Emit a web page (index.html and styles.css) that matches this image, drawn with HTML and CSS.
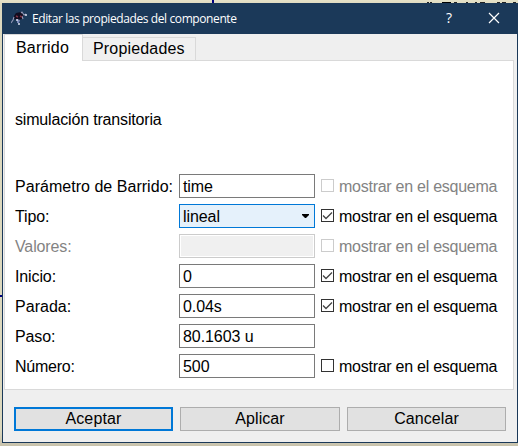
FILE: index.html
```html
<!DOCTYPE html>
<html lang="es">
<head>
<meta charset="utf-8">
<title>Editar las propiedades del componente</title>
<link rel="stylesheet" href="styles.css">
</head>
<body>
<div class="backdrop-wire top"></div>
<div class="backdrop-wire side"></div>
<div class="backdrop-marks"></div>
<main class="dialog">
  <header class="titlebar">
    <svg class="app-icon" width="17" height="16" viewBox="0 0 17 16">
      <path d="M3 5l2-3 5-1 3 3-2 4-4 1-4-1z" fill="#110d20"/>
      <path d="M10 2l1-1 2 3 2-1M3 6L2 9l-2 3M11 5l1 3" fill="none" stroke="#9297b5" stroke-width="1.1"/>
      <path d="M6 8l3 1-1 3-2 0z" fill="#7888b8"/>
      <path d="M5 5l2 1M9 5l2 1" stroke="#803447" stroke-width="1.4"/>
      <path d="M14 4h2M7 13h2M5 9h2" stroke="#dce1ef" stroke-width="1.4"/>
    </svg>
    <h1 class="title">Editar las propiedades del componente</h1>
    <span class="help">?</span>
    <svg class="close" width="12" height="12" viewBox="0 0 12 12"><path d="M1 1l10 10M11 1L1 11" stroke="#fff" stroke-width="1.2"/></svg>
  </header>
  <nav class="tabs">
    <span class="tab active">Barrido</span>
    <span class="tab second">Propiedades</span>
  </nav>
  <section class="panel">
    <p class="heading">simulación transitoria</p>
    <div class="row"><span class="label wide">Parámetro de Barrido:</span><span class="field">time</span><span class="check disabled"><i class="box"></i><span>mostrar en el esquema</span></span></div>
    <div class="row"><span class="label">Tipo:</span><span class="field select">lineal<svg class="arrow" width="7" height="4" viewBox="0 0 7 4"><path d="M0 0h7v1L4 4H3L0 1z"/></svg></span><span class="check"><i class="box"><svg width="11" height="11" viewBox="0 0 11 11"><path d="M1 5.5l3 3 6-6"/></svg></i><span>mostrar en el esquema</span></span></div>
    <div class="row"><span class="label disabled">Valores:</span><span class="field off"></span><span class="check disabled"><i class="box"></i><span>mostrar en el esquema</span></span></div>
    <div class="row"><span class="label">Inicio:</span><span class="field">0</span><span class="check"><i class="box"><svg width="11" height="11" viewBox="0 0 11 11"><path d="M1 5.5l3 3 6-6"/></svg></i><span>mostrar en el esquema</span></span></div>
    <div class="row"><span class="label wide">Parada:</span><span class="field">0.04s</span><span class="check"><i class="box"><svg width="11" height="11" viewBox="0 0 11 11"><path d="M1 5.5l3 3 6-6"/></svg></i><span>mostrar en el esquema</span></span></div>
    <div class="row"><span class="label">Paso:</span><span class="field">80.1603 u</span></div>
    <div class="row"><span class="label tight">Número:</span><span class="field">500</span><span class="check"><i class="box"></i><span>mostrar en el esquema</span></span></div>
  </section>
  <footer class="buttons">
    <span class="button default">Aceptar</span>
    <span class="button">Aplicar</span>
    <span class="button">Cancelar</span>
  </footer>
</main>
</body>
</html>
```
FILE: styles.css
```css
* { box-sizing: border-box; }
body {
  margin: 0;
  width: 518px;
  height: 446px;
  padding: 3px 0 0 2px;
  overflow: hidden;
  background: linear-gradient(#e6e2c8, #dcd8be 5px, #dcd8be 430px, #c8c2ac);
  font: 16px/20px "Liberation Sans", Arial, sans-serif;
  color: #000;
}
.backdrop-wire { position: absolute; background: #000080; }
.backdrop-wire.top { left: 212px; top: 0; width: 2px; height: 3px; }
.backdrop-wire.side { left: 0; top: 295px; width: 2px; height: 2px; }
.backdrop-marks {
  position: absolute;
  left: 427px;
  top: 2px;
  width: 89px;
  height: 1px;
  background: linear-gradient(90deg, #222 2px, transparent 2px 3px, #222 3px 5px, transparent 5px 15px, #000 15px 24px, transparent 24px 27px, #222 27px 30px, transparent 30px 39px, #222 39px 41px, transparent 41px 48px, #222 48px 50px, transparent 50px 53px, #222 53px 58px, transparent 58px 70px, #222 70px 73px, transparent 73px 75px, #222 75px 79px, transparent 79px 86px, #222 86px);
}
.dialog {
  position: relative;
  width: 516px;
  height: 440px;
  border: 1px solid #1b3959;
  border-top: 0;
  background: #efefef;
  display: flex;
  flex-direction: column;
}
.titlebar {
  height: 31px;
  flex: none;
  display: flex;
  align-items: center;
  background: #1b3959;
  color: #fff;
  padding-left: 8px;
}
.app-icon { margin-right: 4px; }
.title {
  margin: 0;
  width: 412px;
  font: 12px/16px "Open Sans", "Noto Sans", sans-serif;
  letter-spacing: -0.4px;
  white-space: nowrap;
}
.help { width: 8px; font: 14px/16px "Open Sans", sans-serif; margin: -2px 0 0 2px; }
.close { margin: -1px 0 0 34px; }
.tabs {
  height: 27px;
  flex: none;
  display: flex;
  align-items: flex-end;
  padding-left: 1px;
  position: relative;
  z-index: 1;
  margin-bottom: -1px;
}
.tab { border: 1px solid #d9d9d9; white-space: nowrap; }
.tab.active {
  width: 79px;
  height: 27px;
  padding: 3px 0 0 11px;
  background: #fff;
  border-bottom: 0;
  letter-spacing: 0.2px;
}
.tab.second {
  width: 113px;
  height: 24px;
  padding: 1px 0 0 10px;
  border-left: 0;
  background: #f0f0f0;
  letter-spacing: 0.17px;
}
.panel {
  width: 510px;
  height: 330px;
  margin-left: 1px;
  flex: none;
  padding: 0 0 0 10px;
  border: 1px solid #d9d9d9;
  background: #fff;
}
.heading { margin: 49px 0 42px; line-height: 20px; letter-spacing: -0.17px; }
.row { height: 30px; display: flex; align-items: center; white-space: nowrap; }
.label { width: 164px; letter-spacing: -0.12px; }
.label.wide { letter-spacing: 0.03px; }
.label.tight { letter-spacing: -0.25px; }
.field {
  width: 136px;
  height: 24px;
  margin-top: -2px;
  padding: 2px 0 0 3px;
  border: 1px solid #7a7a7a;
  background: #fff;
  letter-spacing: -0.08px;
}
.select {
  display: flex;
  justify-content: space-between;
  padding-right: 5px;
  background: #e5f1fb;
  border-color: #0078d7;
}
.arrow { margin-top: 7px; }
.field.off { background: #f0f0f0; border-color: #ccc; box-shadow: inset 0 0 0 1px #fff; }
.check { display: flex; align-items: center; margin-left: 6px; letter-spacing: -0.26px; }
.box {
  width: 13px;
  height: 13px;
  border: 1px solid #333;
  margin: -3px 5px 0 0;
  display: block;
}
.box svg { display: block; fill: none; stroke: #444; stroke-width: 1.3; }
.disabled { color: #838383; }
.disabled .box { border-color: #ccc; }
.buttons { display: flex; gap: 7px; padding: 17px 0 0 11px; }
.button {
  width: 160px;
  height: 24px;
  border: 1px solid #adadad;
  background: #e1e1e1;
  text-align: center;
  padding-top: 1px;
  letter-spacing: 0.08px;
}
.button.default { width: 159px; border: 2px solid #0078d7; padding-top: 0; letter-spacing: 0.15px; }
.button:last-child { width: 159px; }
```
